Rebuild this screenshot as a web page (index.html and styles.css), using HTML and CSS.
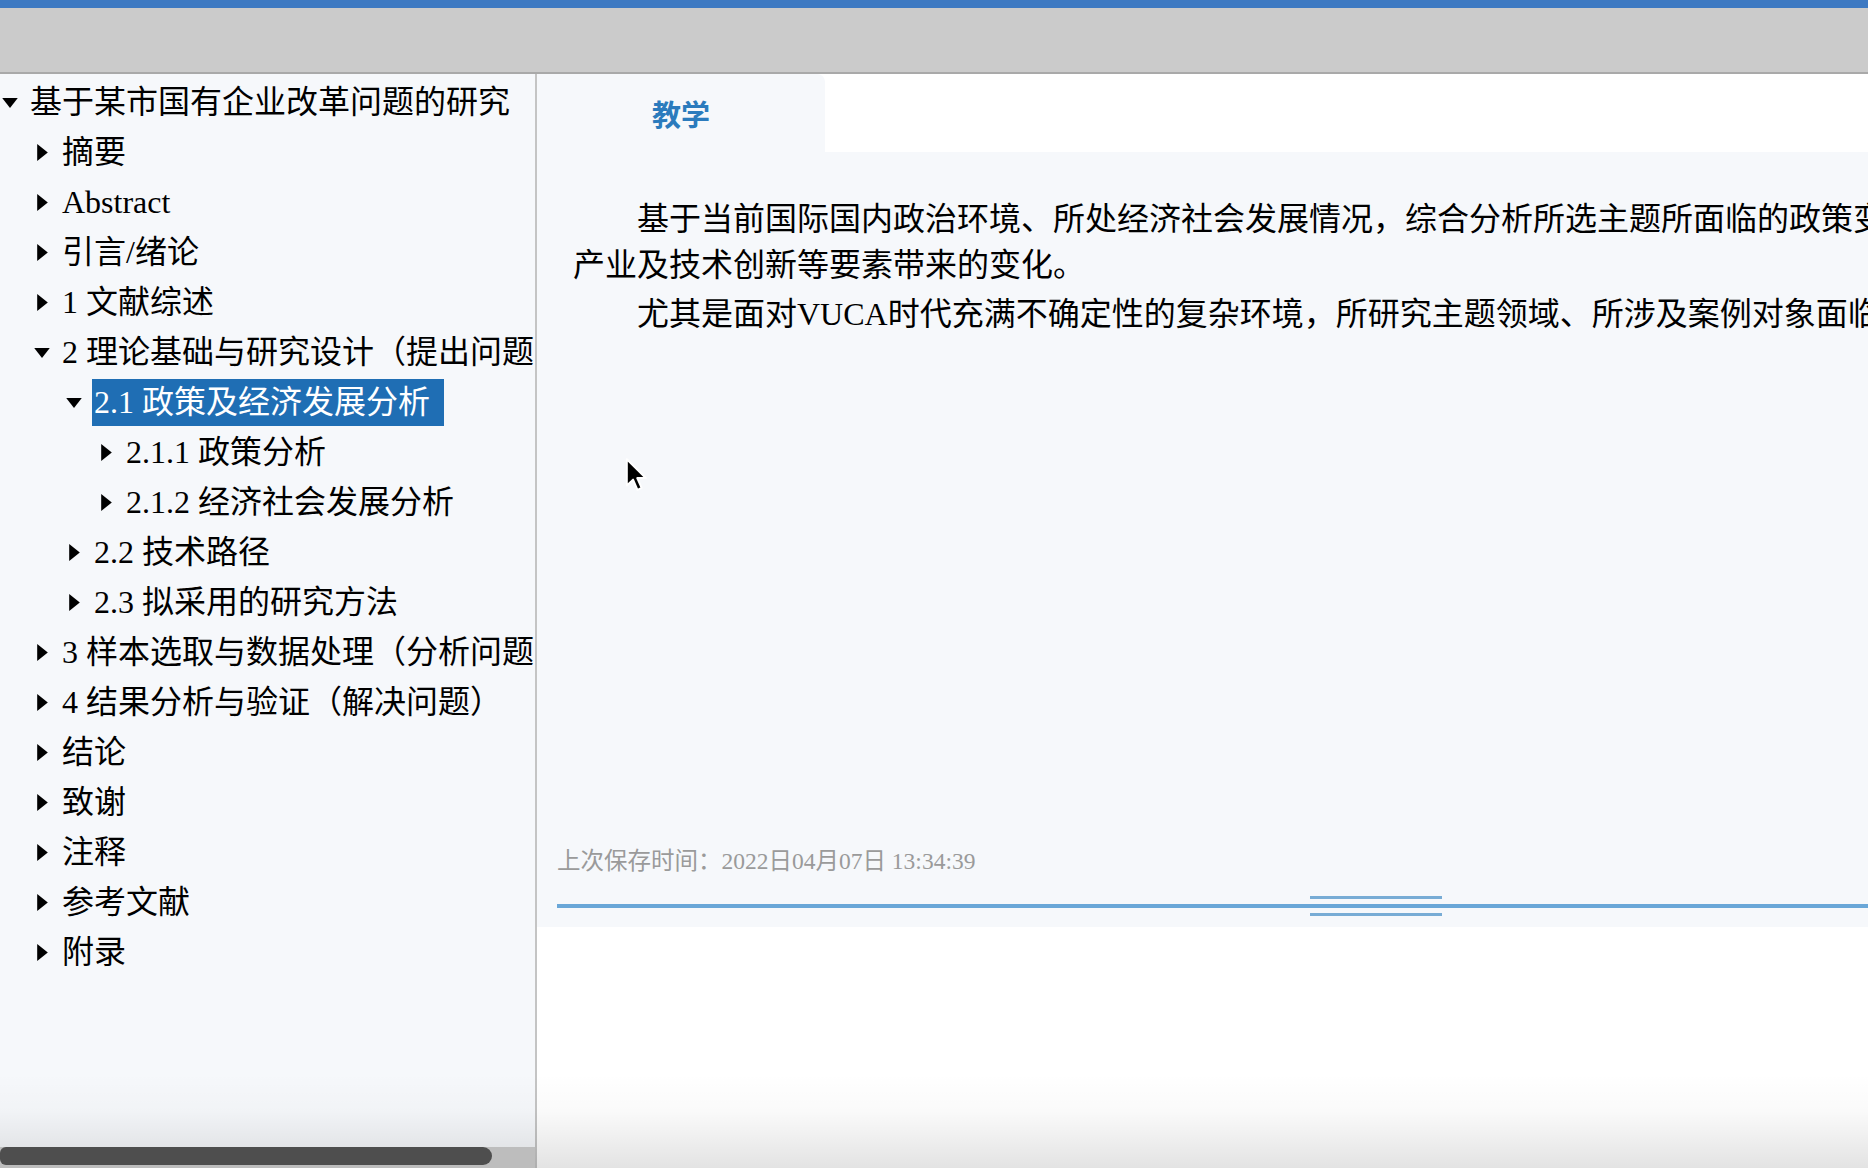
FILE: index.html
```html
<!DOCTYPE html>
<html lang="zh-CN">
<head>
<meta charset="utf-8">
<title>论文大纲</title>
<link rel="stylesheet" href="styles.css">
</head>
<body>
<div class="topbar"></div>
<div class="toolbar"></div>
<div class="layout">
  <aside class="sidebar">
    <div class="tree">
      <div class="row l0"><span class="tog"><svg class="down" viewBox="0 0 14 9"><path d="M0 0H14L7 9Z"/></svg></span><span class="label">基于某市国有企业改革问题的研究</span></div>
      <div class="row l1"><span class="tog"><svg class="right" viewBox="0 0 10 16"><path d="M0 0L10 8L0 16Z"/></svg></span><span class="label">摘要</span></div>
      <div class="row l1"><span class="tog"><svg class="right" viewBox="0 0 10 16"><path d="M0 0L10 8L0 16Z"/></svg></span><span class="label">Abstract</span></div>
      <div class="row l1"><span class="tog"><svg class="right" viewBox="0 0 10 16"><path d="M0 0L10 8L0 16Z"/></svg></span><span class="label">引言/绪论</span></div>
      <div class="row l1"><span class="tog"><svg class="right" viewBox="0 0 10 16"><path d="M0 0L10 8L0 16Z"/></svg></span><span class="label">1 文献综述</span></div>
      <div class="row l1"><span class="tog"><svg class="down" viewBox="0 0 14 9"><path d="M0 0H14L7 9Z"/></svg></span><span class="label">2 理论基础与研究设计（提出问题）</span></div>
      <div class="row l2"><span class="tog"><svg class="down" viewBox="0 0 14 9"><path d="M0 0H14L7 9Z"/></svg></span><span class="label selected">2.1 政策及经济发展分析</span></div>
      <div class="row l3"><span class="tog"><svg class="right" viewBox="0 0 10 16"><path d="M0 0L10 8L0 16Z"/></svg></span><span class="label">2.1.1 政策分析</span></div>
      <div class="row l3"><span class="tog"><svg class="right" viewBox="0 0 10 16"><path d="M0 0L10 8L0 16Z"/></svg></span><span class="label">2.1.2 经济社会发展分析</span></div>
      <div class="row l2"><span class="tog"><svg class="right" viewBox="0 0 10 16"><path d="M0 0L10 8L0 16Z"/></svg></span><span class="label">2.2 技术路径</span></div>
      <div class="row l2"><span class="tog"><svg class="right" viewBox="0 0 10 16"><path d="M0 0L10 8L0 16Z"/></svg></span><span class="label">2.3 拟采用的研究方法</span></div>
      <div class="row l1"><span class="tog"><svg class="right" viewBox="0 0 10 16"><path d="M0 0L10 8L0 16Z"/></svg></span><span class="label">3 样本选取与数据处理（分析问题）</span></div>
      <div class="row l1"><span class="tog"><svg class="right" viewBox="0 0 10 16"><path d="M0 0L10 8L0 16Z"/></svg></span><span class="label">4 结果分析与验证（解决问题）</span></div>
      <div class="row l1"><span class="tog"><svg class="right" viewBox="0 0 10 16"><path d="M0 0L10 8L0 16Z"/></svg></span><span class="label">结论</span></div>
      <div class="row l1"><span class="tog"><svg class="right" viewBox="0 0 10 16"><path d="M0 0L10 8L0 16Z"/></svg></span><span class="label">致谢</span></div>
      <div class="row l1"><span class="tog"><svg class="right" viewBox="0 0 10 16"><path d="M0 0L10 8L0 16Z"/></svg></span><span class="label">注释</span></div>
      <div class="row l1"><span class="tog"><svg class="right" viewBox="0 0 10 16"><path d="M0 0L10 8L0 16Z"/></svg></span><span class="label">参考文献</span></div>
      <div class="row l1"><span class="tog"><svg class="right" viewBox="0 0 10 16"><path d="M0 0L10 8L0 16Z"/></svg></span><span class="label">附录</span></div>
    </div>
    <div class="hscroll"><div class="thumb"></div></div>
  </aside>
  <main class="main">
    <div class="tabs">
      <div class="tab">教学</div>
      <div class="tab-rest"></div>
    </div>
    <section class="editor">
      <div class="doc">
        <p class="para">基于当前国际国内政治环境、所处经济社会发展情况，综合分析所选主题所面临的政策变化、经济<br><span class="cont">产业及技术创新等要素带来的变化。</span></p>
        <p class="para">尤其是面对VUCA时代充满不确定性的复杂环境，所研究主题领域、所涉及案例对象面临的挑战</p>
      </div>
      <div class="saved">上次保存时间：2022日04月07日 13:34:39</div>
      <div class="splitter"></div>
    </section>
    <div class="blank"></div>
  </main>
</div>
<svg class="cursor" viewBox="0 0 18 28"><path d="M1.5 1.5V23L6.6 18.2L10.2 26.5L13.6 25L10 16.9H17Z" fill="#000" stroke="#fff" stroke-width="1.6" stroke-linejoin="round"/></svg>
<div class="fade"></div>
</body>
</html>
```
FILE: styles.css
```css
html, body {
  margin: 0;
  padding: 0;
}
body {
  width: 1868px;
  height: 1168px;
  overflow: hidden;
  background: #ffffff;
  font-family: "Liberation Serif", "Noto Sans CJK SC", serif;
  color: #000;
  position: relative;
}
.topbar {
  height: 8px;
  background: #3d79c2;
}
.toolbar {
  height: 64px;
  background: #cbcbcb;
  border-bottom: 2px solid #a9a9a9;
}
.layout {
  display: flex;
  height: 1094px;
}
.sidebar {
  width: 535px;
  flex: none;
  background: #f6f8fb;
  border-right: 2px solid #c4c4c4;
  display: flex;
  flex-direction: column;
}
.tree {
  flex: 1;
  overflow: hidden;
  padding-top: 5px;
}
.row {
  height: 50px;
  display: flex;
  align-items: flex-start;
  white-space: nowrap;
  font-size: 32px;
}
.row.l0 { padding-left: 0; }
.row.l1 { padding-left: 32px; }
.row.l2 { padding-left: 64px; }
.row.l3 { padding-left: 96px; }
.tog {
  width: 20px;
  height: 47px;
  flex: none;
  display: flex;
  align-items: center;
  justify-content: center;
  margin-right: 8px;
}
.tog svg { fill: #000; display: block; }
.tog .down { width: 16px; height: 10px; }
.tog .right { width: 11px; height: 17px; }
.label {
  display: inline-block;
  height: 47px;
  line-height: 47px;
  padding: 0 2px;
}
.label.selected {
  background: #1f6eb4;
  color: #fff;
  padding-right: 14px;
}
.hscroll {
  height: 21px;
  flex: none;
  background: #bdbdbd;
  position: relative;
  z-index: 3;
}
.thumb {
  width: 492px;
  height: 18px;
  background: #4e4e4e;
  border-radius: 6px 9px 9px 6px;
}
.main {
  flex: 1;
  min-width: 0;
  display: flex;
  flex-direction: column;
  overflow: hidden;
}
.tabs {
  height: 78px;
  display: flex;
  flex: none;
}
.tab {
  width: 288px;
  background: #f6f8fb;
  border-top-right-radius: 8px;
  display: flex;
  align-items: center;
  justify-content: center;
  font-family: "Noto Sans CJK SC", sans-serif;
  font-weight: 700;
  font-size: 29px;
  color: #2b7bbd;
}
.tab-rest {
  flex: 1;
  background: #ffffff;
}
.editor {
  height: 775px;
  flex: none;
  background: #f6f8fb;
  padding: 44px 0 0 20px;
  box-sizing: border-box;
}
.doc {
  height: 650px;
  padding-left: 16px;
  overflow: hidden;
  font-size: 32px;
  line-height: 46px;
  color: #000;
}
.para {
  margin: 0 0 3px 0;
  text-indent: 64px;
  white-space: nowrap;
}
.para .cont {
  display: inline-block;
  text-indent: 0;
}
.saved {
  height: 30px;
  line-height: 30px;
  font-size: 23.5px;
  color: #9a9a9a;
  white-space: nowrap;
}
.splitter {
  margin-top: 20px;
  height: 20px;
  background:
    linear-gradient(#78acd5, #78acd5) 753px 0 / 132px 3px no-repeat,
    linear-gradient(#6aa7d8, #6aa7d8) 0 8px / 100% 4px no-repeat,
    linear-gradient(#78acd5, #78acd5) 753px 17px / 132px 3px no-repeat;
}
.blank {
  flex: 1;
  background: #ffffff;
}
.cursor {
  position: absolute;
  left: 625px;
  top: 457px;
  width: 22px;
  height: 35px;
  z-index: 5;
}
.fade {
  position: absolute;
  left: 0;
  right: 0;
  bottom: 0;
  height: 95px;
  background: linear-gradient(rgba(0,0,0,0), rgba(0,0,0,0.02) 40%, rgba(0,0,0,0.11));
  pointer-events: none;
  z-index: 2;
}
```
